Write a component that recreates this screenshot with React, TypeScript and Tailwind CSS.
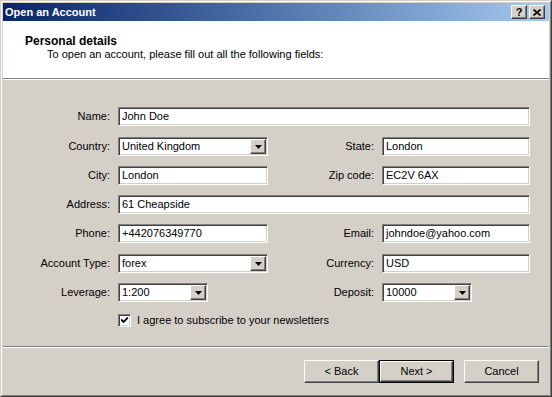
import React from "react";

const font = { fontFamily: '"Liberation Sans", Arial, sans-serif' };

const sunken =
  "border border-t-[#808080] border-l-[#808080] border-b-white border-r-white shadow-[inset_1px_1px_0_#404040,inset_-1px_-1px_0_#d4d0c8]";
const raised =
  "border border-t-white border-l-white border-b-[#404040] border-r-[#404040] shadow-[inset_-1px_-1px_0_#808080] bg-[#d4d0c8]";

function Field({ value, w }: { value: string; w: string }) {
  return (
    <div className={`${sunken} ${w} h-[19px] bg-white flex items-center pl-[3px] text-[11px] text-black`}>
      {value}
    </div>
  );
}

function Combo({ value, w }: { value: string; w: string }) {
  return (
    <div className={`${sunken} ${w} h-[19px] bg-white flex items-center pl-[3px] pr-[1px] text-[11px] text-black`}>
      <span className="flex-1">{value}</span>
      <div className={`${raised} w-[16px] h-[15px] flex items-center justify-center`}>
        <svg width="7" height="4" viewBox="0 0 7 4">
          <path d="M0 0h7L3.5 4z" fill="#000" />
        </svg>
      </div>
    </div>
  );
}

function Label({ text, w }: { text: string; w: string }) {
  return <div className={`${w} pr-[8px] text-right text-[11px] text-black`}>{text}</div>;
}

function Button({ text, def }: { text: string; def?: boolean }) {
  return (
    <div className={`w-[75px] h-[23px] ${def ? "border border-black" : ""}`}>
      <div className={`${raised} h-full w-full flex items-center justify-center text-[11px] text-black`}>
        {text}
      </div>
    </div>
  );
}

export default function App() {
  return (
    <div style={font} className="w-[552px] h-[397px] overflow-hidden bg-[#d4d0c8]">
      <div className="w-full h-full border-t border-l border-t-[#d4d0c8] border-l-[#d4d0c8] border-b border-r border-b-[#404040] border-r-[#404040]">
        <div className="w-full h-full border-t border-l border-t-white border-l-white border-b border-r border-b-[#808080] border-r-[#808080]">
          <div className="w-full h-full border border-[#d4d0c8] flex flex-col">
            {/* title bar */}
            <div className="h-[18px] flex items-center bg-gradient-to-r from-[#0a246a] to-[#a6caf0] pl-[2px] pr-[4px]">
              <span className="flex-1 text-[11px] font-bold text-white">Open an Account</span>
              <div className={`${raised} w-[16px] h-[14px] flex items-center justify-center text-[11px] font-bold text-black leading-none`}>
                ?
              </div>
              <div className={`${raised} ml-[2px] w-[16px] h-[14px] flex items-center justify-center`}>
                <svg width="8" height="7" viewBox="0 0 8 7">
                  <path d="M0.5 0.5l7 6M7.5 0.5l-7 6" stroke="#000" strokeWidth="1.6" />
                </svg>
              </div>
            </div>

            {/* header */}
            <div className="h-[58px] bg-white border-b border-b-[#808080] pl-[22px] pt-[13px]">
              <div className="text-[12px] font-bold text-black leading-[14px]">Personal details</div>
              <div className="pl-[22px] text-[11px] text-black leading-[13px]">
                To open an account, please fill out all the following fields:
              </div>
            </div>

            {/* body */}
            <div className="border-t border-t-white h-[267px] pt-[27px] flex flex-col">
              <div className="flex items-center h-[19px]">
                <Label text="Name:" w="w-[115px]" />
                <Field value="John Doe" w="w-[412px]" />
              </div>
              <div className="flex items-center h-[19px] mt-[11px]">
                <Label text="Country:" w="w-[115px]" />
                <Combo value="United Kingdom" w="w-[150px]" />
                <Label text="State:" w="w-[114px]" />
                <Field value="London" w="w-[148px]" />
              </div>
              <div className="flex items-center h-[19px] mt-[10px]">
                <Label text="City:" w="w-[115px]" />
                <Field value="London" w="w-[150px]" />
                <Label text="Zip code:" w="w-[114px]" />
                <Field value="EC2V 6AX" w="w-[148px]" />
              </div>
              <div className="flex items-center h-[19px] mt-[10px]">
                <Label text="Address:" w="w-[115px]" />
                <Field value="61 Cheapside" w="w-[412px]" />
              </div>
              <div className="flex items-center h-[19px] mt-[10px]">
                <Label text="Phone:" w="w-[115px]" />
                <Field value="+442076349770" w="w-[150px]" />
                <Label text="Email:" w="w-[114px]" />
                <Field value="johndoe@yahoo.com" w="w-[148px]" />
              </div>
              <div className="flex items-center h-[19px] mt-[11px]">
                <Label text="Account Type:" w="w-[115px]" />
                <Combo value="forex" w="w-[150px]" />
                <Label text="Currency:" w="w-[114px]" />
                <Field value="USD" w="w-[148px]" />
              </div>
              <div className="flex items-center h-[19px] mt-[10px]">
                <Label text="Leverage:" w="w-[115px]" />
                <Combo value="1:200" w="w-[90px]" />
                <Label text="Deposit:" w="w-[174px]" />
                <Combo value="10000" w="w-[90px]" />
              </div>
              <div className="flex items-center h-[13px] mt-[12px] pl-[115px]">
                <div className={`${sunken} w-[13px] h-[13px] bg-white flex items-center justify-center`}>
                  <svg width="7" height="7" viewBox="0 0 7 7">
                    <path d="M0 2.5l2.5 2.5L7 0.5" stroke="#000" strokeWidth="1.8" fill="none" />
                  </svg>
                </div>
                <span className="ml-[6px] text-[11px] text-black">I agree to subscribe to your newsletters</span>
              </div>
            </div>

            {/* separator */}
            <div className="h-[2px] border-t border-t-[#808080] border-b border-b-white" />

            {/* buttons */}
            <div className="flex justify-end items-start pt-[12px] pr-[10px]">
              <Button text="< Back" />
              <Button text="Next >" def />
              <div className="w-[10px]" />
              <Button text="Cancel" />
            </div>
          </div>
        </div>
      </div>
    </div>
  );
}
